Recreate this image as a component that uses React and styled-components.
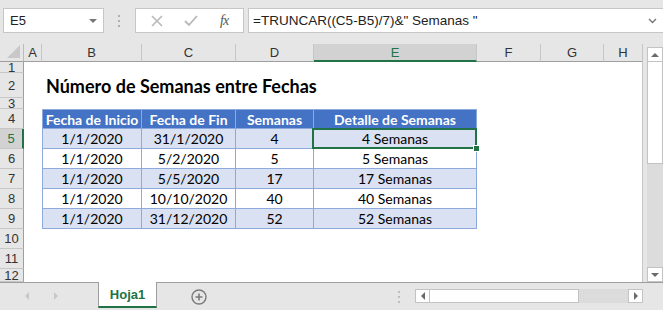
import React from 'react';
import styled, { createGlobalStyle, css } from 'styled-components';

const GlobalStyle = createGlobalStyle`
  html, body {
    margin: 0;
    padding: 0;
    background: #e6e6e6;
  }
  body {
    width: 663px;
    height: 310px;
    overflow: hidden;
    font-family: "Liberation Sans", Arial, sans-serif;
  }
`;

const GREEN = '#217346';
const CELL_FONT = `"Lato", "Liberation Sans", sans-serif`;

const Window = styled.div`
  width: 663px;
  height: 310px;
  display: flex;
  flex-direction: column;
  background: #e6e6e6;
`;

/* ---------- formula bar ---------- */

const FormulaBar = styled.div`
  height: 44px;
  display: flex;
  align-items: flex-start;
  padding: 8px 0 0 3px;
  box-sizing: border-box;
`;

const NameBox = styled.div`
  width: 101px;
  height: 25px;
  box-sizing: border-box;
  background: #fff;
  border: 1px solid #c6c6c6;
  display: flex;
  align-items: center;
  justify-content: space-between;
  padding: 0 6px 0 6px;
  font-size: 13px;
  color: #222;
`;

const Caret = styled.span`
  width: 0;
  height: 0;
  border-left: 4px solid transparent;
  border-right: 4px solid transparent;
  border-top: 4px solid #777;
`;

const Grip = styled.div`
  width: 31px;
  height: 25px;
  display: flex;
  justify-content: center;
  align-items: center;
`;

const IconBox = styled.div`
  width: 109px;
  height: 25px;
  box-sizing: border-box;
  background: #fff;
  border: 1px solid #c6c6c6;
  display: flex;
  align-items: center;
  justify-content: space-around;
  padding: 0 4px;
`;

const Fx = styled.span`
  font-family: "Liberation Serif", serif;
  font-style: italic;
  font-size: 14px;
  color: #555;
  letter-spacing: -1px;
`;

const FormulaInput = styled.div`
  margin-left: 4px;
  flex: 1;
  height: 25px;
  box-sizing: border-box;
  background: #fff;
  border: 1px solid #c6c6c6;
  border-right: none;
  display: flex;
  align-items: center;
  justify-content: space-between;
  padding: 0 6px 0 4px;
  font-size: 13.5px;
  color: #222;
  white-space: pre;
`;

/* ---------- sheet ---------- */

const Main = styled.div`
  display: flex;
  height: 238px;
`;

const Sheet = styled.div`
  width: 643px;
  display: grid;
  grid-template-columns: 24px 18px 100px 94px 78px 163px 64px 63px 39px;
  grid-template-rows: 18px 11px 25px 11px repeat(8, 20px) 13px;
  background: #fff;
  overflow: hidden;
  border-right: 1px solid #c6c6c6;
  box-sizing: border-box;
`;

const Corner = styled.div`
  background: #e6e6e6;
  border-right: 1px solid #bcbcbc;
  border-bottom: 1px solid #9e9e9e;
  position: relative;
  &::after {
    content: '';
    position: absolute;
    right: 3px;
    bottom: 3px;
    border-left: 13px solid transparent;
    border-bottom: 13px solid #c8c8c8;
  }
`;

const ColHead = styled.div`
  background: ${p => (p.$active ? '#d2d2d2' : '#e6e6e6')};
  border-right: 1px solid #c6c6c6;
  border-bottom: ${p => (p.$active ? `2px solid ${GREEN}` : '1px solid #9e9e9e')};
  display: flex;
  align-items: center;
  justify-content: center;
  font-size: 13px;
  color: ${p => (p.$active ? GREEN : '#333')};
  box-sizing: border-box;
  padding-top: ${p => (p.$active ? '1px' : '0')};
`;

const RowHead = styled.div`
  background: ${p => (p.$active ? '#d2d2d2' : '#e6e6e6')};
  border-right: ${p => (p.$active ? `2px solid ${GREEN}` : '1px solid #9e9e9e')};
  border-bottom: 1px solid #c6c6c6;
  display: flex;
  align-items: center;
  justify-content: center;
  font-size: 13px;
  color: ${p => (p.$active ? GREEN : '#333')};
  overflow: hidden;
  line-height: 1;
  box-sizing: border-box;
`;

const Cell = styled.div`
  box-sizing: border-box;
  display: flex;
  align-items: center;
  justify-content: center;
  font-family: ${CELL_FONT};
  font-size: 14px;
  color: #000;
  white-space: nowrap;
  position: relative;
  ${p => p.$table && css`
    border-right: 1px solid #8ea9db;
    border-bottom: 1px solid #8ea9db;
  `}
  ${p => p.$first && css`border-left: 1px solid #8ea9db;`}
  ${p => p.$top && css`border-top: 1px solid #8ea9db;`}
  ${p => p.$fill === 'head' && css`
    background: #4472c4;
    color: #fff;
    font-weight: 700;
  `}
  ${p => p.$fill === 'band' && css`background: #d9e1f2;`}
  ${p => p.$selected && css`
    &::after {
      content: '';
      position: absolute;
      left: -2px;
      top: -1px;
      right: -1px;
      bottom: -1px;
      border: 2px solid ${GREEN};
    }
    &::before {
      content: '';
      position: absolute;
      right: -4px;
      bottom: -4px;
      width: 5px;
      height: 5px;
      background: ${GREEN};
      border: 1px solid #fff;
      z-index: 2;
    }
  `}
`;

const Title = styled.div`
  grid-column: 3 / span 4;
  display: flex;
  align-items: flex-end;
  padding: 0 0 1px 4px;
  font-family: ${CELL_FONT};
  font-weight: 700;
  font-size: 18px;
  color: #000;
  white-space: nowrap;
`;

const Blank = styled.div``;

/* ---------- vertical scroll ---------- */

const VScroll = styled.div`
  width: 20px;
  display: flex;
  flex-direction: column;
  padding: 3px 0 0 4px;
  box-sizing: border-box;
`;

const ArrowBtn = styled.div`
  width: 16px;
  height: 15px;
  box-sizing: border-box;
  background: #fff;
  border: 1px solid #c3c3c3;
  display: flex;
  align-items: center;
  justify-content: center;
`;

const VThumb = styled.div`
  width: 16px;
  height: 102px;
  box-sizing: border-box;
  background: #fff;
  border: 1px solid #c3c3c3;
  border-top: none;
`;

const VTrack = styled.div`
  flex: 1;
  background: #dcdcdc;
  width: 16px;
`;

const Tri = styled.span`
  width: 0;
  height: 0;
  ${p => p.$dir === 'up' && css`
    border-left: 4px solid transparent;
    border-right: 4px solid transparent;
    border-bottom: 4px solid #6a6a6a;
  `}
  ${p => p.$dir === 'down' && css`
    border-left: 4px solid transparent;
    border-right: 4px solid transparent;
    border-top: 4px solid #6a6a6a;
  `}
  ${p => p.$dir === 'left' && css`
    border-top: 4px solid transparent;
    border-bottom: 4px solid transparent;
    border-right: 4px solid ${p.$color || '#6a6a6a'};
  `}
  ${p => p.$dir === 'right' && css`
    border-top: 4px solid transparent;
    border-bottom: 4px solid transparent;
    border-left: 4px solid ${p.$color || '#6a6a6a'};
  `}
`;

/* ---------- tab bar ---------- */

const TabBar = styled.div`
  flex: 1;
  display: flex;
  align-items: flex-start;
  border-top: 1px solid #9e9e9e;
  box-sizing: border-box;
`;

const NavArrows = styled.div`
  width: 98px;
  height: 26px;
  display: flex;
  align-items: center;
  padding-left: 25px;
  gap: 25px;
  box-sizing: border-box;
`;

const SheetTab = styled.div`
  width: 59px;
  height: 26px;
  margin-top: -1px;
  box-sizing: border-box;
  background: #fff;
  border-left: 1px solid #9e9e9e;
  border-right: 1px solid #9e9e9e;
  border-bottom: 2px solid ${GREEN};
  display: flex;
  align-items: center;
  justify-content: center;
  font-weight: 700;
  font-size: 13px;
  color: ${GREEN};
`;

const AddSheet = styled.div`
  width: 84px;
  height: 27px;
  display: flex;
  align-items: center;
  justify-content: center;
`;

const Splitter = styled.div`
  width: 174px;
  height: 27px;
  display: flex;
  align-items: center;
  justify-content: flex-end;
  padding-right: 14px;
  box-sizing: border-box;
`;

const HScroll = styled.div`
  margin-top: 6px;
  width: 228px;
  height: 14px;
  display: flex;
  box-sizing: border-box;
`;

const HBtn = styled.div`
  width: 15px;
  height: 14px;
  box-sizing: border-box;
  background: #fff;
  border: 1px solid #c3c3c3;
  display: flex;
  align-items: center;
  justify-content: center;
`;

const HThumb = styled.div`
  width: 149px;
  height: 14px;
  box-sizing: border-box;
  background: #fff;
  border: 1px solid #c3c3c3;
  border-left: none;
`;

const HTrack = styled.div`
  flex: 1;
  background: #dcdcdc;
`;

const Dots = ({ color = '#b0b0b0' }) => (
  <svg width="3" height="14" viewBox="0 0 3 14">
    <rect x="0" y="1" width="2" height="2" fill={color} />
    <rect x="0" y="6" width="2" height="2" fill={color} />
    <rect x="0" y="11" width="2" height="2" fill={color} />
  </svg>
);

const columns = ['A', 'B', 'C', 'D', 'E', 'F', 'G', 'H'];

const tableHead = ['Fecha de Inicio', 'Fecha de Fin', 'Semanas', 'Detalle de Semanas'];
const tableRows = [
  ['1/1/2020', '31/1/2020', '4', '4 Semanas'],
  ['1/1/2020', '5/2/2020', '5', '5 Semanas'],
  ['1/1/2020', '5/5/2020', '17', '17 Semanas'],
  ['1/1/2020', '10/10/2020', '40', '40 Semanas'],
  ['1/1/2020', '31/12/2020', '52', '52 Semanas'],
];

const renderRow = (n) => {
  const out = [<RowHead key={`rh${n}`} $active={n === 5}>{n}</RowHead>];
  out.push(<Blank key={`a${n}`} />);
  if (n === 2) {
    out.push(<Title key="title">Número de Semanas entre Fechas</Title>);
    out.push(<Blank key="f2" />, <Blank key="g2" />, <Blank key="h2" />);
    return out;
  }
  if (n >= 4 && n <= 9) {
    const values = n === 4 ? tableHead : tableRows[n - 5];
    const fill = n === 4 ? 'head' : n % 2 === 1 ? 'band' : 'plain';
    values.forEach((v, i) => {
      out.push(
        <Cell
          key={`c${n}-${i}`}
          $table
          $first={i === 0}
          $top={n === 4}
          $fill={fill}
          $selected={n === 5 && i === 3}
        >
          {v}
        </Cell>
      );
    });
  } else {
    for (let i = 0; i < 4; i++) out.push(<Blank key={`b${n}-${i}`} />);
  }
  out.push(<Blank key={`f${n}`} />, <Blank key={`g${n}`} />, <Blank key={`h${n}`} />);
  return out;
};

export default function App() {
  const rows = Array.from({ length: 12 }, (_, i) => i + 1);
  return (
    <>
      <GlobalStyle />
      <Window>
        <FormulaBar>
          <NameBox>
            <span>E5</span>
            <Caret />
          </NameBox>
          <Grip>
            <Dots />
          </Grip>
          <IconBox>
            <svg width="12" height="12" viewBox="0 0 12 12">
              <path d="M1 1 L11 11 M11 1 L1 11" stroke="#b8b8b8" strokeWidth="1.6" />
            </svg>
            <svg width="14" height="12" viewBox="0 0 14 12">
              <path d="M1 6 L5 10 L13 1" stroke="#b8b8b8" strokeWidth="1.8" fill="none" />
            </svg>
            <Fx>fx</Fx>
          </IconBox>
          <FormulaInput>
            <span>=TRUNCAR((C5-B5)/7)&amp;" Semanas "</span>
            <svg width="9" height="6" viewBox="0 0 9 6">
              <path d="M1 1 L4.5 4.5 L8 1" stroke="#777" strokeWidth="1.4" fill="none" />
            </svg>
          </FormulaInput>
        </FormulaBar>

        <Main>
          <Sheet>
            <Corner />
            {columns.map(c => (
              <ColHead key={c} $active={c === 'E'}>{c}</ColHead>
            ))}
            {rows.map(renderRow)}
          </Sheet>
          <VScroll>
            <ArrowBtn><Tri $dir="up" /></ArrowBtn>
            <VThumb />
            <VTrack />
            <ArrowBtn><Tri $dir="down" /></ArrowBtn>
          </VScroll>
        </Main>

        <TabBar>
          <NavArrows>
            <Tri $dir="left" $color="#c8c8c8" />
            <Tri $dir="right" $color="#c8c8c8" />
          </NavArrows>
          <SheetTab>Hoja1</SheetTab>
          <AddSheet>
            <svg width="16" height="16" viewBox="0 0 16 16">
              <circle cx="8" cy="8" r="7" stroke="#7a7a7a" strokeWidth="1.4" fill="none" />
              <path d="M8 4.5 V11.5 M4.5 8 H11.5" stroke="#7a7a7a" strokeWidth="1.6" />
            </svg>
          </AddSheet>
          <Splitter>
            <Dots color="#bdbdbd" />
          </Splitter>
          <HScroll>
            <HBtn><Tri $dir="left" /></HBtn>
            <HThumb />
            <HTrack />
            <HBtn><Tri $dir="right" /></HBtn>
          </HScroll>
        </TabBar>
      </Window>
    </>
  );
}
